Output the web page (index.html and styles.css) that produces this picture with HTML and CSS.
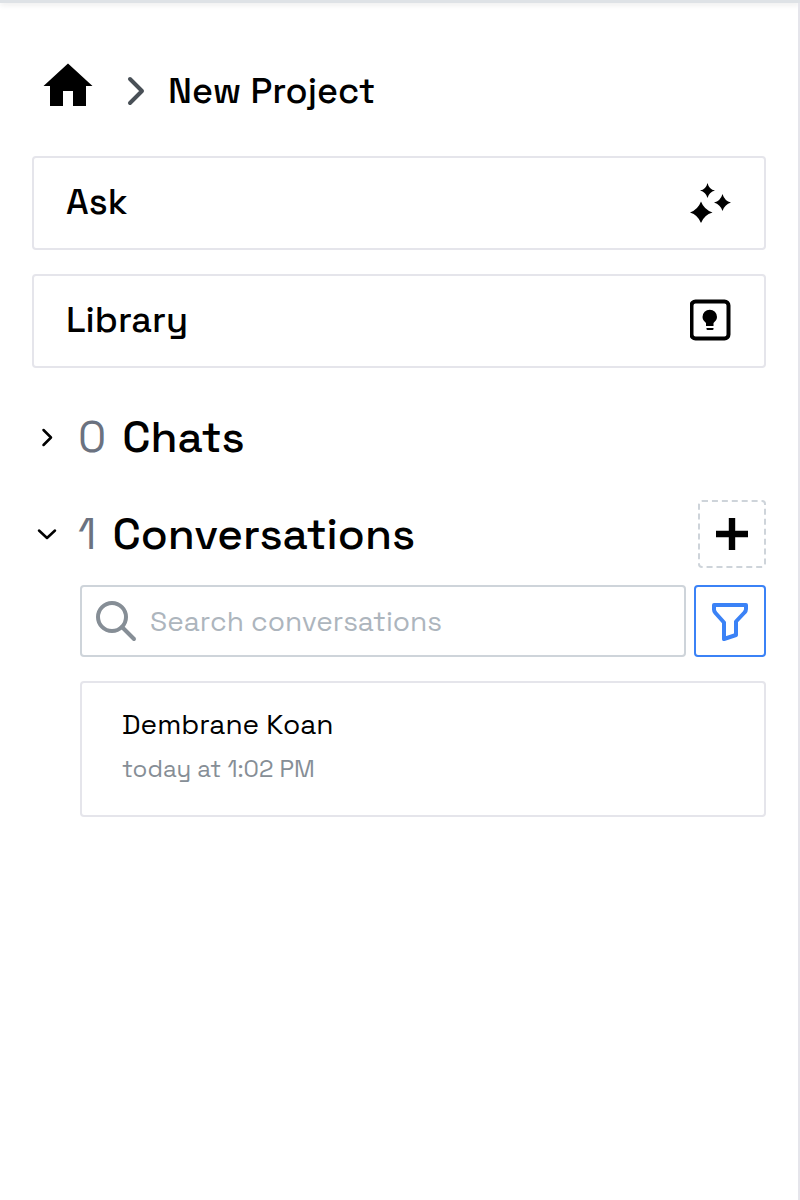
FILE: index.html
```html
<!DOCTYPE html>
<html lang="en">
<head>
<meta charset="utf-8">
<meta name="viewport" content="width=device-width, initial-scale=1">
<title>New Project</title>
<link rel="stylesheet" href="styles.css">
</head>
<body>
<header class="topbar"></header>
<main class="sidebar">
  <nav class="breadcrumb" aria-label="Breadcrumb">
    <a class="home" href="#" aria-label="Home">
      <svg width="50" height="44" viewBox="0 0 50 44"><path d="M25 0.500 49.500 23H43V43H30V28H20V43H7V23H0.500Z" fill="currentColor"/></svg>
    </a>
    <svg class="separator" width="18" height="30" viewBox="0 0 18 30" fill="none" stroke="currentColor" stroke-width="4" stroke-linecap="round" stroke-linejoin="round"><path d="M3 3 15 15 3 27"/></svg>
    <h1 class="title">New Project</h1>
  </nav>

  <div class="links">
    <a class="link" href="#">Ask
      <svg width="42" height="42" viewBox="0 -2 42 42" fill="currentColor"><path d="M17.500 0Q19 6.500 25 7.500 19 9 17.500 15 16 9 10 7.500 16 6.500 17.500 0Z"/><path d="M32.500 11Q34.500 18 41 19.500 34.500 21.500 32.500 28 30.500 21.500 24 19.500 30.500 18 32.500 11Z"/><path d="M11 18.500Q14 26.500 22.500 29.500 14 32 11 40 8 32 0 29.500 8 26.500 11 18.500Z"/></svg>
    </a>
    <a class="link" href="#">Library
      <svg width="42" height="42" viewBox="0.500 1 42 42"><rect x="2" y="3.500" width="37" height="37" rx="4" fill="none" stroke="currentColor" stroke-width="4"/><path d="M13 19A7 7 0 0 1 27.500 19C27.500 22 25.500 23 24 25V28H16.500V25C15 23 13 22 13 19Z" fill="currentColor"/><path d="M17 30H24V31Q24 32 23 32H18Q17 32 17 31Z" fill="currentColor"/></svg>
    </a>
  </div>

  <section class="chats">
    <button class="toggle" type="button" aria-expanded="false">
      <svg width="30" height="30" viewBox="0 0 30 30"><path d="m11.500 8 7.500 7.500-7.500 7.500"/></svg>
      <span class="count">0</span><span>Chats</span>
    </button>
  </section>

  <section class="conversations">
    <div class="section-head">
      <button class="toggle" type="button" aria-expanded="true">
        <svg width="30" height="30" viewBox="0 0 30 30"><path d="m7 11.500 8 7.500 8-7.500"/></svg>
        <span class="count">1</span><span>Conversations</span>
      </button>
      <button class="add" type="button" aria-label="Add conversation">
        <svg width="32" height="32" viewBox="0 0 32 32"><path d="M12.800 0h6.400v12.800H32v6.400H19.200V32h-6.400V19.200H0v-6.400h12.800Z" fill="currentColor"/></svg>
      </button>
    </div>
    <div class="section-body">
      <div class="tools">
        <label class="search">
          <svg width="42" height="42" viewBox="0 0 42 42" fill="none" stroke="currentColor" stroke-width="4" stroke-linecap="round"><circle cx="17" cy="17" r="14"/><path d="m27 27 12 12"/></svg>
          <input type="text" placeholder="Search conversations" aria-label="Search conversations">
        </label>
        <button class="filter" type="button" aria-label="Filter">
          <svg width="40" height="40" viewBox="0 0 40 40" fill="none" stroke="currentColor" stroke-width="4" stroke-linejoin="round"><path d="M4 4H36V8Q36 10 34.500 11.500L26 20.500V34L14 38V21.500L5.500 12Q4 10.500 4 8.500Z"/></svg>
        </button>
      </div>
      <a class="card" href="#">
        <span class="name">Dembrane Koan</span>
        <span class="time">today at 1:02 PM</span>
      </a>
    </div>
  </section>
</main>
</body>
</html>
```
FILE: styles.css
```css
* { box-sizing: border-box; }
body {
  margin: 0;
  min-height: 100vh;
  display: flex;
  flex-direction: column;
  background: #fff;
  color: #000;
  font-family: "Space Grotesk", Inter, "Liberation Sans", sans-serif;
}
svg { display: block; flex: none; }
a { color: inherit; text-decoration: none; }
button { padding: 0; color: inherit; font: inherit; background: none; border: 0; cursor: pointer; }
.topbar {
  height: 3px;
  background: #dee2e6;
  box-shadow: 0 1px 6px rgba(0, 0, 0, 0.14);
}
.sidebar {
  flex: 1;
  padding: 56px 32px 32px;
  border-right: 2px solid #e5e5eb;
}
.breadcrumb { display: flex; align-items: center; height: 64px; padding-left: 11px; }
.home { margin-right: 34px; padding-bottom: 12px; }
.separator { color: #495057; }
.title { margin: 0 0 0 23px; font-size: 36px; line-height: 48px; font-weight: 500; }
.links { display: flex; flex-direction: column; gap: 24px; margin-top: 33px; }
.link {
  display: flex;
  align-items: center;
  justify-content: space-between;
  padding: 20px 32px 22px;
  border: 2px solid #e5e5eb;
  border-radius: 4px;
  font-size: 36px;
  line-height: 48px;
  font-weight: 500;
}
.chats { margin-top: 34px; }
.conversations { margin-top: 27px; }
.section-head { display: flex; align-items: center; justify-content: space-between; }
.toggle { display: flex; align-items: center; height: 70px; font-size: 44px; line-height: 64px; font-weight: 500; }
.toggle svg { margin-right: 16px; fill: none; stroke: currentColor; stroke-width: 2.5; stroke-linecap: round; stroke-linejoin: round; }
.count { margin-right: 16px; color: #6b7280; font-weight: 400; }
.add {
  display: grid;
  place-items: center;
  width: 68px;
  height: 68px;
  border: 2px dashed #ced4da;
  border-radius: 4px;
}
.section-body { padding-left: 48px; }
.tools { display: flex; gap: 8px; margin-top: 16px; }
.search {
  flex: 1;
  display: flex;
  align-items: center;
  gap: 13px;
  height: 72px;
  padding: 0 13px;
  border: 2px solid #ced4da;
  border-radius: 4px;
  color: #868e96;
}
.search input {
  flex: 1;
  min-width: 0;
  padding: 0;
  border: 0;
  outline: 0;
  background: none;
  color: #000;
  font: 400 28px/40px "Space Grotesk", Inter, "Liberation Sans", sans-serif;
}
.search input::placeholder { color: #adb5bd; opacity: 1; }
.filter {
  display: grid;
  place-items: center;
  width: 72px;
  height: 72px;
  border: 2px solid #3b82f6;
  border-radius: 4px;
  color: #3b82f6;
}
.card {
  display: flex;
  flex-direction: column;
  gap: 5px;
  margin-top: 24px;
  padding: 21px 40px 26px;
  border: 2px solid #e5e5eb;
  border-radius: 4px;
}
.name { font-size: 28px; line-height: 40px; }
.time { color: #868e96; font-size: 24px; line-height: 40px; }
```
